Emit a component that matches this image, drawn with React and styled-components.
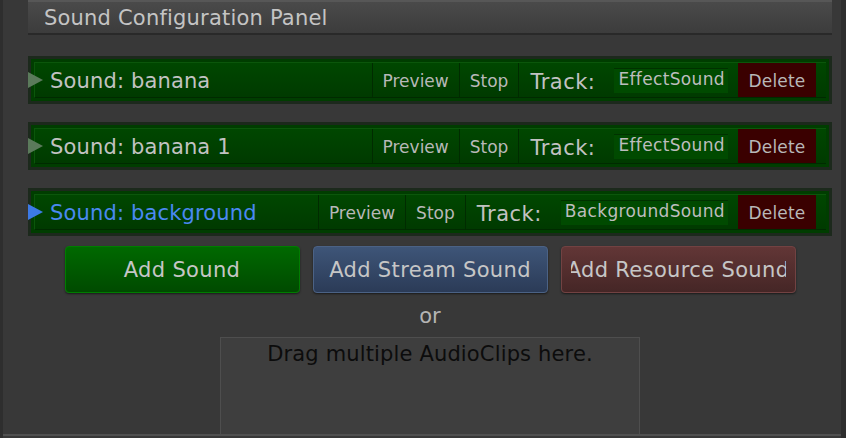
import React from "react";
import styled, { createGlobalStyle } from "styled-components";

const GlobalStyle = createGlobalStyle`
  html, body {
    margin: 0;
    padding: 0;
    background: #383838;
  }
  body {
    font-family: "DejaVu Sans", "Liberation Sans", sans-serif;
  }
`;

const sounds = [
  { name: "banana", track: "EffectSound", selected: false },
  { name: "banana 1", track: "EffectSound", selected: false },
  { name: "background", track: "BackgroundSound", selected: true },
];

const Window = styled.div`
  height: 438px;
  box-sizing: border-box;
  display: flex;
  flex-direction: column;
  background: #383838;
  border-left: 3px solid #2e2e2e;
  border-right: 5px solid #2e2e2e;
  overflow: hidden;
`;

const Content = styled.div`
  height: 434px;
  flex-shrink: 0;
  padding: 0 9px 0 25px;
  display: flex;
  flex-direction: column;
  overflow: hidden;
`;

const Header = styled.div`
  height: 35px;
  flex-shrink: 0;
  box-sizing: border-box;
  display: flex;
  align-items: center;
  padding: 1px 0 0 16px;
  border-top: 2px solid #575757;
  border-bottom: 2px solid #292929;
  background: linear-gradient(#4a4a4a, #3c3c3c);
  color: #c4c4c4;
  font-size: 21px;
  letter-spacing: 0.2px;
`;

const RowList = styled.div`
  display: flex;
  flex-direction: column;
  gap: 18px;
  margin-top: 21px;
`;

const Row = styled.div`
  position: relative;
  height: 48px;
  box-sizing: border-box;
  border: 3px solid #1c291c;
  background: #003d00;
  padding: 3px;
`;

const Arrow = styled.span`
  position: absolute;
  left: -3px;
  top: 50%;
  transform: translateY(-50%);
  width: 0;
  height: 0;
  border-top: 8px solid transparent;
  border-bottom: 8px solid transparent;
  border-left: 15px solid ${(p) => (p.$active ? "#3c7ae6" : "#5b7a5b")};
`;

const Band = styled.div`
  height: 100%;
  box-sizing: border-box;
  display: flex;
  align-items: stretch;
  background: linear-gradient(#004700, #003a00);
  border-top: 1px solid #0b560b;
  border-left: 1px solid #0b560b;
  border-bottom: 1px solid #002a00;
`;

const Label = styled.div`
  flex: 1;
  display: flex;
  align-items: center;
  padding: 2px 0 0 15px;
  font-size: 21px;
  letter-spacing: 0.15px;
  color: ${(p) => (p.$active ? "#4b89f2" : "#c2c2c2")};
  white-space: nowrap;
`;

const Section = styled.div`
  display: flex;
  align-items: center;
  padding: 2px 10px 0;
  border-left: 1px solid #002b00;
  font-size: 17px;
  color: #b8b8b8;
`;

const TrackSection = styled.div`
  display: flex;
  align-items: center;
  padding: 0 10px 0 11px;
  border-left: 1px solid #002b00;
`;

const TrackLabel = styled.span`
  font-size: 21px;
  letter-spacing: 0.5px;
  color: #c2c2c2;
  margin: 3px 19px 0 0;
`;

const Field = styled.span`
  height: 25px;
  box-sizing: border-box;
  padding: 0 3px 0 4px;
  line-height: 21px;
  background: #004a00;
  border-top: 1px solid #003100;
  font-size: 17px;
  letter-spacing: 0.35px;
  color: #bdbdbd;
  margin-right: 10px;
  white-space: nowrap;
`;

const DeleteButton = styled.div`
  align-self: stretch;
  width: 78px;
  display: flex;
  align-items: center;
  justify-content: center;
  padding-top: 2px;
  box-sizing: border-box;
  background: #3a0000;
  font-size: 17px;
  letter-spacing: 0.2px;
  color: #b8b8b8;
`;

const ButtonRow = styled.div`
  display: flex;
  justify-content: center;
  gap: 13px;
  margin-top: 10px;
`;

const palettes = {
  green: { top: "#006900", bottom: "#004a00", edge: "#007d00" },
  blue: { top: "#3e5578", bottom: "#2b3b57", edge: "#4b6285" },
  red: { top: "#623636", bottom: "#452626", edge: "#724242" },
};

const ActionButton = styled.div`
  width: 235px;
  height: 47px;
  box-sizing: border-box;
  display: flex;
  padding: 0 9px;
  border-radius: 4px;
  border: 1px solid ${(p) => palettes[p.$tone].edge};
  background: linear-gradient(${(p) => palettes[p.$tone].top}, ${(p) => palettes[p.$tone].bottom});
  box-shadow: 0 1px 2px rgba(0, 0, 0, 0.55);
`;

const ButtonText = styled.span`
  flex: 1;
  display: flex;
  align-items: center;
  justify-content: center;
  overflow: hidden;
  white-space: nowrap;
  font-size: 21px;
  letter-spacing: 0.35px;
  color: #c6c6c6;
`;

const Or = styled.div`
  text-align: center;
  font-size: 21px;
  line-height: 24px;
  color: #b4b4b4;
  padding: 11px 0 9px;
`;

const DropBox = styled.div`
  align-self: center;
  width: 420px;
  height: 97px;
  flex-shrink: 0;
  box-sizing: border-box;
  border: 1px solid #4e4e4e;
  border-bottom: none;
  background: #3e3e3e;
  padding-top: 4px;
  text-align: center;
  font-size: 21px;
  letter-spacing: 0.15px;
  color: #0c0c0c;
`;

const BottomLine = styled.div`
  height: 2px;
  flex-shrink: 0;
  background: #505050;
`;

const SoundRow = ({ sound }) => (
  <Row>
    <Band>
      <Label $active={sound.selected}>Sound: {sound.name}</Label>
      <Section>Preview</Section>
      <Section>Stop</Section>
      <TrackSection>
        <TrackLabel>Track:</TrackLabel>
        <Field>{sound.track}</Field>
        <DeleteButton>Delete</DeleteButton>
      </TrackSection>
    </Band>
    <Arrow $active={sound.selected} />
  </Row>
);

export default function App() {
  return (
    <>
      <GlobalStyle />
      <Window>
        <Content>
          <Header>Sound Configuration Panel</Header>
          <RowList>
            {sounds.map((s) => (
              <SoundRow key={s.name} sound={s} />
            ))}
          </RowList>
          <ButtonRow>
            <ActionButton $tone="green">
              <ButtonText>Add Sound</ButtonText>
            </ActionButton>
            <ActionButton $tone="blue">
              <ButtonText>Add Stream Sound</ButtonText>
            </ActionButton>
            <ActionButton $tone="red">
              <ButtonText>Add Resource Sound</ButtonText>
            </ActionButton>
          </ButtonRow>
          <Or>or</Or>
          <DropBox>Drag multiple AudioClips here.</DropBox>
        </Content>
        <BottomLine />
      </Window>
    </>
  );
}
